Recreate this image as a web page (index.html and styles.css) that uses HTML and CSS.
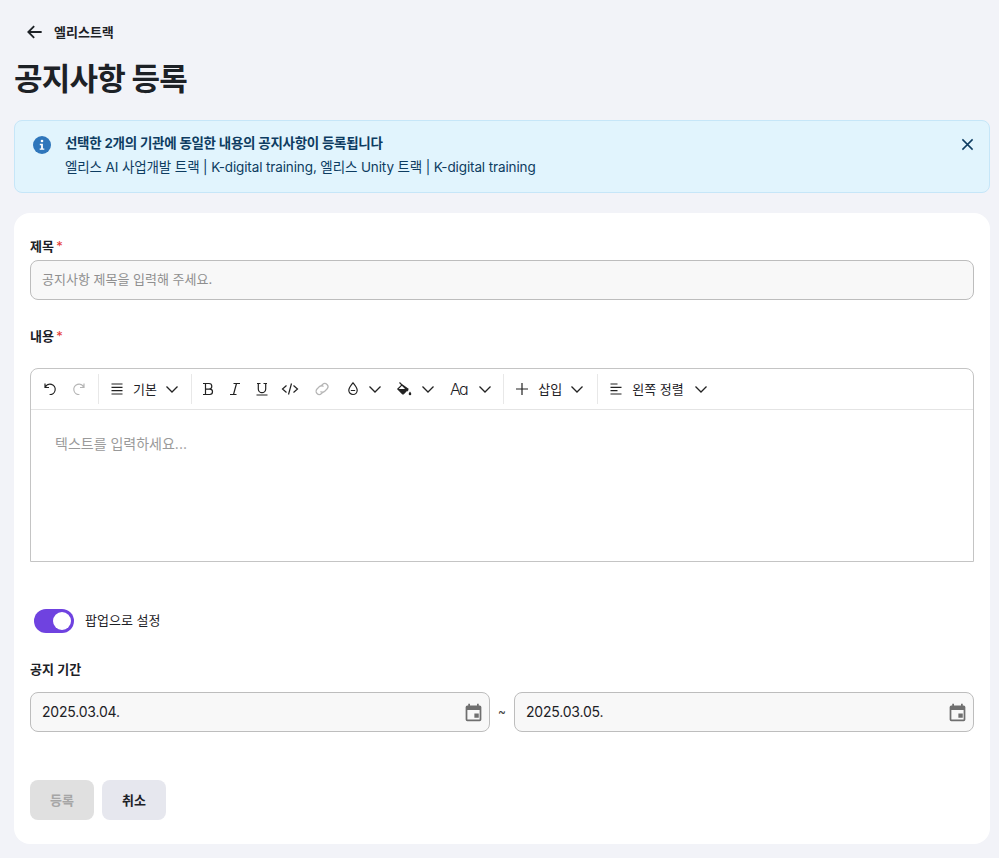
FILE: index.html
```html
<!DOCTYPE html>
<html lang="ko">
<head>
    <meta charset="UTF-8">
    <title>공지사항 등록</title>
    <link rel="stylesheet" href="styles.css">
</head>
<body>
    <!-- Page header -->
    <a class="back-link" href="#">
        <svg class="back-icon" viewBox="0 0 24 24"><path d="M20 12H4.500M11 5l-7 7 7 7"/></svg>
        <span>엘리스트랙</span>
    </a>
    <h1 class="page-title">공지사항 등록</h1>

    <!-- Notice banner -->
    <div class="alert">
        <svg class="alert-icon" viewBox="0 0 20 20">
            <circle cx="10" cy="10" r="9" fill="#2f76bb"/>
            <circle cx="10" cy="6" r="1.300" fill="#fff"/>
            <path d="M7.800 8.800h3.100v4.600h1.400v1.400H7.700v-1.400h1.400v-3.200H7.800z" fill="#fff"/>
        </svg>
        <div class="alert-text">
            <strong>선택한 2개의 기관에 동일한 내용의 공지사항이 등록됩니다</strong>
            <p>엘리스 AI 사업개발 트랙 | K-digital training, 엘리스 Unity 트랙 | K-digital training</p>
        </div>
        <svg class="alert-close" viewBox="0 0 14 14"><path d="M1.500 1.500l11 11M12.500 1.500l-11 11"/></svg>
    </div>

    <!-- Form -->
    <form class="card">
        <label class="field-label">제목 <em>*</em></label>
        <input class="text-input" type="text" placeholder="공지사항 제목을 입력해 주세요.">

        <label class="field-label content-label">내용 <em>*</em></label>
        <div class="editor">
            <div class="toolbar">
                <div class="tool-group history">
                    <svg class="tool" viewBox="0 0 16 16"><path d="M3 2.500v4h4M3.200 6.300A5.200 5.200 0 1 1 7.600 13.500"/></svg>
                    <svg class="tool muted" viewBox="0 0 16 16"><path d="M13 2.500v4H9M12.800 6.300A5.200 5.200 0 1 0 8.400 13.500"/></svg>
                </div>
                <div class="tool-group">
                    <svg class="tool" viewBox="0 0 16 16"><path d="M2.500 3h11M2.500 6.300h11M2.500 9.600h11M2.500 13h11"/></svg>
                    <span class="tool-label">기본</span>
                    <svg class="chevron" viewBox="0 0 14 14"><path d="M1.500 4.500L7 10l5.500-5.500"/></svg>
                </div>
                <div class="tool-group format">
                    <div class="marks">
                        <svg class="tool" viewBox="0 0 16 16"><path d="M3 2.500h6a2.800 2.800 0 0 1 0 5.600H5.500M5.500 8.100h4.300a2.700 2.700 0 0 1 0 5.400H3M5.500 2.500v11"/></svg>
                        <svg class="tool" viewBox="0 0 16 16"><path d="M6.500 2.500h6.500M3 13.500h6.500M9.500 2.500l-3 11"/></svg>
                        <svg class="tool" viewBox="0 0 16 16"><path d="M3 2.500h3.500M9.500 2.500H13M4.300 2.500v5.500a3.700 3.700 0 0 0 7.400 0V2.500M2.500 14h11"/></svg>
                        <svg class="tool wide" viewBox="0 0 18 16"><path d="M5.500 4.500L1.500 8l4 3.500M12.500 4.500l4 3.500-4 3.500M10.500 2.500l-3 11"/></svg>
                    </div>
                    <svg class="tool muted wide" viewBox="0 0 18 16"><path d="M7.500 5.500l2-2a3 3 0 0 1 4.500 4.500l-2.500 2.500a3 3 0 0 1-4 0M10.500 10.500l-2 2a3 3 0 0 1-4.500-4.500l2.500-2.500a3 3 0 0 1 4 0"/></svg>
                    <div class="menu-tool drop">
                        <svg class="tool" viewBox="0 0 16 16"><path d="M8 1.800c2 2.700 4.200 5 4.200 7.500a4.200 4.200 0 0 1-8.400 0c0-2.500 2.200-4.800 4.200-7.500zM5.800 9.500h4.400"/></svg>
                        <svg class="chevron" viewBox="0 0 14 14"><path d="M1.500 4.500L7 10l5.500-5.500"/></svg>
                    </div>
                    <div class="menu-tool">
                        <svg class="tool" viewBox="0 0 16 16"><path d="M3.500 1.500l8.500 8.500M6 3.800L1.800 8l4.500 4.500a1 1 0 0 0 1.400 0L12 8z"/><path class="solid" d="M2.200 8h9.500l-4 4.300a1 1 0 0 1-1.400 0zM14 10.500c.7 1 1.300 1.800 1.300 2.500a1.300 1.300 0 0 1-2.600 0c0-.7.600-1.500 1.300-2.500z"/></svg>
                        <svg class="chevron" viewBox="0 0 14 14"><path d="M1.500 4.500L7 10l5.500-5.500"/></svg>
                    </div>
                    <div class="menu-tool">
                        <span class="font-glyph">Aa</span>
                        <svg class="chevron" viewBox="0 0 14 14"><path d="M1.500 4.500L7 10l5.500-5.500"/></svg>
                    </div>
                </div>
                <div class="tool-group insert">
                    <svg class="tool" viewBox="0 0 16 16"><path d="M8 2v12M2 8h12"/></svg>
                    <span class="tool-label">삽입</span>
                    <svg class="chevron" viewBox="0 0 14 14"><path d="M1.500 4.500L7 10l5.500-5.500"/></svg>
                </div>
                <div class="tool-group last">
                    <svg class="tool" viewBox="0 0 16 16"><path d="M2.500 3h7M2.500 6.300h11M2.500 9.600h7M2.500 13h11"/></svg>
                    <span class="tool-label">왼쪽 정렬</span>
                    <svg class="chevron" viewBox="0 0 14 14"><path d="M1.500 4.500L7 10l5.500-5.500"/></svg>
                </div>
            </div>
            <div class="editor-body">텍스트를 입력하세요...</div>
        </div>

        <div class="toggle-row">
            <span class="toggle"><span class="toggle-knob"></span></span>
            <span class="toggle-text">팝업으로 설정</span>
        </div>

        <label class="field-label period-label">공지 기간</label>
        <div class="date-row">
            <div class="date-input">
                <span>2025.03.04.</span>
                <svg class="date-icon" viewBox="0 0 24 24"><path d="M19 4h-1V2h-2v2H8V2H6v2H5a2 2 0 0 0-2 2v14a2 2 0 0 0 2 2h14a2 2 0 0 0 2-2V6a2 2 0 0 0-2-2zm0 16H5V9h14zm-6-7h5v5h-5z"/></svg>
            </div>
            <span class="date-sep">~</span>
            <div class="date-input">
                <span>2025.03.05.</span>
                <svg class="date-icon" viewBox="0 0 24 24"><path d="M19 4h-1V2h-2v2H8V2H6v2H5a2 2 0 0 0-2 2v14a2 2 0 0 0 2 2h14a2 2 0 0 0 2-2V6a2 2 0 0 0-2-2zm0 16H5V9h14zm-6-7h5v5h-5z"/></svg>
            </div>
        </div>

        <div class="actions">
            <button class="btn btn-disabled" type="button" disabled>등록</button>
            <button class="btn" type="button">취소</button>
        </div>
    </form>
</body>
</html>
```

FILE: styles.css
```css
body {
    font-family: Inter, "Noto Sans CJK KR", sans-serif;
    margin: 0;
    padding: 0 9px 14px 14px;
    background-color: #f2f3f8;
    color: #1d2126;
    font-size: 14px;
}

/* Page header */
.back-link {
    display: flex;
    align-items: center;
    gap: 9px;
    height: 20px;
    margin: 22px 0 0 11px;
    color: #1d2126;
    text-decoration: none;
    font-size: 13px;
    font-weight: 600;
}

.back-link span {
    padding-bottom: 2px;
}

.back-icon {
    width: 20px;
    height: 20px;
    fill: none;
    stroke: #1d2126;
    stroke-width: 2.2;
}

.page-title {
    margin: 14px 0 18px;
    height: 46px;
    line-height: 46px;
    font-size: 31px;
    font-weight: 700;
    letter-spacing: -0.8px;
}

/* Notice banner */
.alert {
    display: flex;
    align-items: flex-start;
    gap: 13px;
    height: 73px;
    box-sizing: border-box;
    padding: 10px 15px 0 17px;
    background-color: #e1f4fd;
    border: 1px solid #c6e6f8;
    border-radius: 8px;
    color: #0d3c61;
}

.alert-icon {
    width: 20px;
    height: 20px;
    margin-top: 4px;
    flex-shrink: 0;
}

.alert-text {
    flex-grow: 1;
    line-height: 24px;
    font-size: 13.5px;
    letter-spacing: -0.12px;
}

.alert-text strong {
    display: block;
    font-weight: 600;
    letter-spacing: -0.3px;
}

.alert-text p {
    margin: 0;
}

.alert-close {
    width: 13px;
    height: 13px;
    margin-top: 7px;
    fill: none;
    stroke: #0d3c61;
    stroke-width: 1.6;
}

/* Form card */
.card {
    margin-top: 20px;
    padding: 24px 16px;
    background-color: #fff;
    border-radius: 16px;
    height: 631px;
    box-sizing: border-box;
}

.field-label {
    display: block;
    height: 18px;
    line-height: 18px;
    font-size: 13px;
    font-weight: 600;
}

.field-label em {
    color: #e53935;
    font-style: normal;
    font-weight: 400;
    margin-left: -1px;
}

.content-label {
    margin-top: 27px;
}

.text-input {
    display: block;
    width: 100%;
    height: 40px;
    margin-top: 5px;
    padding: 0 11px 2px;
    box-sizing: border-box;
    background-color: #f8f8f8;
    border: 1px solid #bdbdbd;
    border-radius: 8px;
    font-family: inherit;
    font-size: 13px;
}

.text-input::placeholder {
    color: #8f8f8f;
}

/* Editor */
.editor {
    margin-top: 23px;
    height: 194px;
    box-sizing: border-box;
    border: 1px solid #c4c4c4;
    border-top-left-radius: 8px;
    border-top-right-radius: 8px;
}

.toolbar {
    display: flex;
    align-items: center;
    height: 40px;
    border-bottom: 1px solid #e4e4e4;
}

.tool-group {
    display: flex;
    align-items: center;
    gap: 8px;
    height: 30px;
    padding: 0 12px 0 10px;
    border-right: 1px solid #e8e8e8;
}

.tool-group.history {
    gap: 13px;
    padding: 0 11px;
}

.tool-group.format {
    gap: 14px;
    padding: 0 11px 0 8px;
}

.tool-group.insert {
    padding-right: 13px;
}

.tool-group.last {
    border-right: none;
}

.tool-group.last .chevron {
    margin-left: 2px;
}

.marks {
    display: flex;
    align-items: center;
    gap: 11px;
}

.menu-tool {
    display: flex;
    align-items: center;
    gap: 9px;
}

.menu-tool.drop {
    gap: 7px;
}

.tool {
    width: 16px;
    height: 16px;
    flex-shrink: 0;
    fill: none;
    stroke: #222;
    stroke-width: 1.2;
}

.tool.wide {
    width: 18px;
}

.tool.muted {
    stroke: #b5b5b5;
}

.tool .solid {
    fill: #222;
    stroke: none;
}

.tool-label {
    font-size: 13px;
    white-space: nowrap;
    padding-bottom: 2px;
}

.font-glyph {
    margin: 0 2px 0 1px;
    font-size: 16px;
    font-weight: 300;
    letter-spacing: -1.5px;
    font-feature-settings: "cv11";
}

.chevron {
    width: 14px;
    height: 14px;
    flex-shrink: 0;
    fill: none;
    stroke: #222;
    stroke-width: 1.3;
}

.editor-body {
    padding: 23px 24px;
    color: #9a9a9a;
    font-size: 14px;
    line-height: 21px;
}

/* Popup toggle */
.toggle-row {
    display: flex;
    align-items: center;
    gap: 11px;
    margin: 47px 0 0 4px;
    font-size: 13px;
}

.toggle-text {
    padding-bottom: 4px;
}

.toggle {
    display: flex;
    justify-content: flex-end;
    align-items: center;
    width: 40px;
    height: 24px;
    padding: 0 3px;
    box-sizing: border-box;
    background-color: #6f42e0;
    border-radius: 12px;
}

.toggle-knob {
    width: 18px;
    height: 18px;
    background-color: #fff;
    border-radius: 50%;
}

/* Date range */
.period-label {
    margin-top: 27px;
}

.date-row {
    display: flex;
    align-items: center;
    gap: 8px;
    margin-top: 14px;
}

.date-input {
    flex: 1;
    display: flex;
    justify-content: space-between;
    align-items: center;
    height: 40px;
    padding: 0 5px 0 11px;
    box-sizing: border-box;
    background-color: #f8f8f8;
    border: 1px solid #bdbdbd;
    border-radius: 8px;
    letter-spacing: -0.2px;
}

.date-input span {
    padding-bottom: 1px;
}

.date-icon {
    width: 21px;
    height: 21px;
    fill: #6f6f6f;
}

.date-sep {
    font-size: 12px;
    color: #444;
    padding-bottom: 2px;
}

/* Buttons */
.actions {
    display: flex;
    gap: 8px;
    margin-top: 48px;
}

.btn {
    width: 64px;
    height: 40px;
    padding: 0 0 2px;
    background-color: #e6e7ee;
    border: none;
    border-radius: 8px;
    color: #1d2126;
    font-family: inherit;
    font-size: 13px;
    font-weight: 600;
}

.btn-disabled {
    background-color: #e0e0e0;
    color: #a6a6a6;
}
```
